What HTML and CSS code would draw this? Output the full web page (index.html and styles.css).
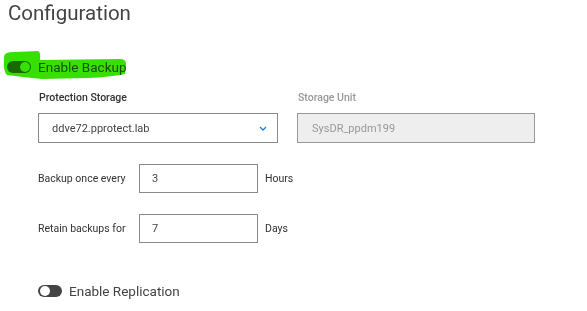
FILE: index.html
```html
<!DOCTYPE html>
<html>
  <head>
    <title>Configuration</title>
    <link rel="stylesheet" href="styles.css">
  </head>
  <body>
    <div class="config-page">
      <h1 class="page-title">Configuration</h1>

      <div class="toggle-row backup-toggle">
        <span class="switch on"><span class="knob"></span></span>
        <span class="toggle-label">Enable Backup</span>
      </div>

      <div class="storage-grid">
        <div class="field">
          <label class="field-label">Protection Storage</label>
          <div class="select-box">
            <span>ddve72.pprotect.lab</span>
            <svg class="chevron" viewBox="0 0 8 5">
              <path d="M1 1l3 3 3-3" />
            </svg>
          </div>
        </div>
        <div class="field disabled">
          <label class="field-label">Storage Unit</label>
          <div class="text-box">SysDR_ppdm199</div>
        </div>
      </div>

      <div class="interval-row first">
        <span class="interval-label">Backup once every</span>
        <div class="interval-input">3</div>
        <span class="interval-unit">Hours</span>
      </div>

      <div class="interval-row">
        <span class="interval-label">Retain backups for</span>
        <div class="interval-input">7</div>
        <span class="interval-unit">Days</span>
      </div>

      <div class="toggle-row replication-toggle">
        <span class="switch"><span class="knob"></span></span>
        <span class="toggle-label">Enable Replication</span>
      </div>

      <!-- marker stroke drawn over the screenshot -->
      <svg class="highlight" viewBox="0 0 140 90" width="140" height="90">
        <path d="M4 57 Q4 52 14 52 L38 51 Q41 52 40 60 L120 59 Q126 59 126 64 L125 74 Q110 77 88 78 L42 79 Q22 77 7 75 Q3 72 4 57 Z" />
      </svg>
    </div>
  </body>
</html>
```

FILE: styles.css
```css
* {
  margin: 0;
  padding: 0;
  box-sizing: border-box;
}

body {
  font-family: Roboto, "Liberation Sans", sans-serif;
  background: #fff;
  color: #444;
}

.config-page {
  position: relative;
  width: 587px;
  height: 311px;
  overflow: hidden;
}

.page-title {
  margin-left: 8px;
  font-size: 20.5px;
  line-height: 26px;
  font-weight: 400;
  color: #444;
}

.toggle-row {
  display: flex;
  align-items: center;
  height: 20px;
}

.backup-toggle {
  margin-top: 31px;
  margin-left: 7px;
}

.replication-toggle {
  margin-top: 38px;
  margin-left: 38px;
}

.switch {
  position: relative;
  width: 24px;
  height: 12px;
  border-radius: 6px;
  background: #444;
}

.switch .knob {
  position: absolute;
  top: 1px;
  left: 2px;
  width: 10px;
  height: 10px;
  border-radius: 50%;
  background: #fff;
}

.switch.on {
  background: #777;
}

.switch.on .knob {
  left: auto;
  right: 1px;
}

.toggle-label {
  margin-left: 7px;
  font-size: 13.5px;
  color: #444;
}

.backup-toggle .toggle-label {
  color: #5a5a5a;
}

.storage-grid {
  display: grid;
  grid-template-columns: 240px 238px;
  column-gap: 19px;
  margin-top: 14px;
  margin-left: 38px;
}

.field-label {
  display: block;
  font-size: 10.5px;
  line-height: 14px;
  font-weight: 500;
  color: #333;
  margin-bottom: 8px;
  padding-left: 1px;
}

.select-box,
.text-box {
  display: flex;
  align-items: center;
  height: 30px;
  font-size: 11px;
  border: 1px solid #8a8a8a;
  color: #444;
}

.select-box {
  justify-content: space-between;
  padding-left: 13px;
  padding-right: 10px;
}

.text-box {
  padding-left: 14px;
}

.chevron {
  width: 8px;
  height: 5px;
  fill: none;
  stroke: #1a7fd4;
  stroke-width: 1.3;
}

.field.disabled .field-label {
  color: #999;
}

.field.disabled .text-box {
  background: #eee;
  border-color: #999;
  color: #999;
}

.interval-row {
  display: flex;
  align-items: center;
  margin-left: 38px;
  margin-top: 21px;
  font-size: 10.5px;
  color: #333;
}

.interval-label {
  width: 101px;
}

.interval-input {
  display: flex;
  align-items: center;
  width: 119px;
  height: 29px;
  padding-left: 12px;
  font-size: 11px;
  border: 1px solid #8a8a8a;
  color: #444;
}

.interval-unit {
  margin-left: 7px;
}

.highlight {
  position: absolute;
  top: 0;
  left: 0;
  pointer-events: none;
  mix-blend-mode: multiply;
}

.highlight path {
  fill: #37e000;
}
```
